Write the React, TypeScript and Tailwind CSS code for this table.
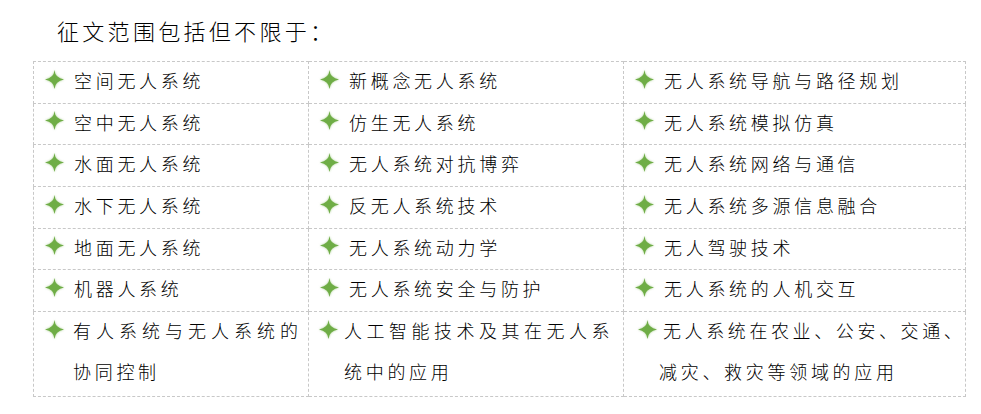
import React from "react";

const Star = () => (
  <svg width="19" height="19" viewBox="0 0 20 20" className="shrink-0" style={{ filter: "drop-shadow(0 0 1px rgba(112,173,71,0.6))" }}>
    <path d="M10 0 Q10.6 8.4 20 10 Q10.6 11.6 10 20 Q9.4 11.6 0 10 Q9.4 8.4 10 0 Z" fill="#6fad46" />
    <circle cx="10" cy="10" r="1.8" fill="#6fad46" />
  </svg>
);

type CellProps = { lines: { text: string; cls?: string }[]; starPad?: string; gap?: string };

const Cell = ({ lines, starPad = "pl-[11px]", gap = "gap-[10px]" }: CellProps) => (
  <td className="border border-dashed border-[#c8c8c8] p-0 align-top">
    <div className={`flex ${starPad} ${gap} -mt-[2px]`}>
      <div className="h-[38px] flex items-center">
        <Star />
      </div>
      <div className="flex flex-col">
        {lines.map((l, i) => (
          <div key={i} className={`whitespace-nowrap leading-[41px] font-light ${l.cls ?? "tracking-[3.7px]"}`}>
            {l.text}
          </div>
        ))}
      </div>
    </div>
  </td>
);

const rows: string[][] = [
  ["空间无人系统", "新概念无人系统", "无人系统导航与路径规划"],
  ["空中无人系统", "仿生无人系统", "无人系统模拟仿真"],
  ["水面无人系统", "无人系统对抗博弈", "无人系统网络与通信"],
  ["水下无人系统", "反无人系统技术", "无人系统多源信息融合"],
  ["地面无人系统", "无人系统动力学", "无人驾驶技术"],
  ["机器人系统", "无人系统安全与防护", "无人系统的人机交互"],
];

export default function App() {
  return (
    <div
      className="w-[981px] h-[414px] bg-white text-black overflow-hidden"
      style={{ fontFamily: '"Noto Sans CJK SC", "Noto Sans", sans-serif' }}
    >
      <div className="pl-[57px] pt-[15px] text-[22px] leading-[30px] tracking-[3.3px] text-black font-light">
        征文范围包括但不限于：
      </div>
      <table className="ml-[33px] mt-[16px] border-collapse text-[18px] table-fixed">
        <colgroup>
          <col className="w-[275px]" />
          <col className="w-[315px]" />
          <col className="w-[339px]" />
        </colgroup>
        <tbody>
          {rows.map((r, i) => (
            <tr key={i} className="h-[41.7px]">
              {r.map((t, j) => (
                <Cell key={j} lines={[{ text: t }]} />
              ))}
            </tr>
          ))}
          <tr className="h-[85px]">
            <Cell
              gap="gap-[9px]"
              lines={[{ text: "有人系统与无人系统的", cls: "tracking-[5px]" }, { text: "协同控制" }]}
            />
            <Cell
              starPad="pl-[10px]"
              gap="gap-[6px]"
              lines={[{ text: "人工智能技术及其在无人系", cls: "tracking-[4.5px]" }, { text: "统中的应用" }]}
            />
            <Cell
              starPad="pl-[14px]"
              gap="gap-[6px]"
              lines={[
                { text: "无人系统在农业、公安、交通、", cls: "tracking-[3.6px]" },
                { text: "减灾、救灾等领域的应用", cls: "tracking-[3.7px] -ml-[4px]" },
              ]}
            />
          </tr>
        </tbody>
      </table>
    </div>
  );
}
